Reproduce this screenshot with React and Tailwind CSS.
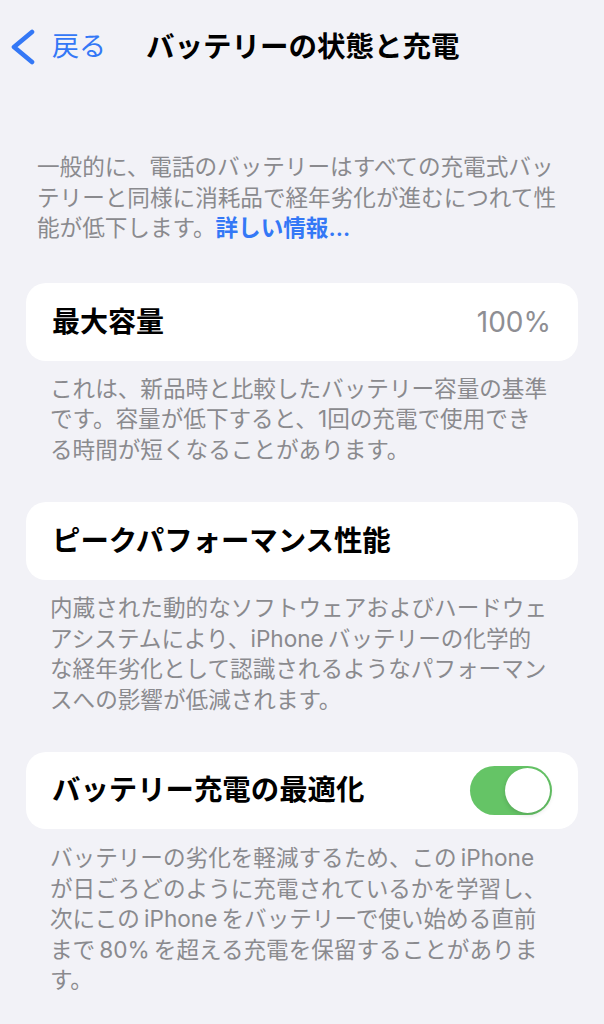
import React, { useState } from 'react';

const FONT = { fontFamily: 'Inter, "Noto Sans CJK JP", sans-serif' };

const Caption = ({ lines, className = '' }) => (
  <p className={`text-[22.6px] leading-[30.5px] text-[#8a8a8e] whitespace-nowrap ${className}`}>
    {lines.map((line, idx) => (
      <span key={idx} className="block">
        {line}
      </span>
    ))}
  </p>
);

const Toggle = ({ on, onChange }) => (
  <button
    onClick={() => onChange(!on)}
    className={`w-[82px] h-[49px] rounded-full p-[2px] flex items-center ${on ? 'bg-[#65c466] justify-end' : 'bg-[#e9e9eb] justify-start'}`}
  >
    <span className="block w-[45px] h-[45px] rounded-full bg-white shadow-[0_2px_5px_rgba(0,0,0,0.15)]" />
  </button>
);

const App = () => {
  const [optimized, setOptimized] = useState(true);

  return (
    <div className="min-h-screen bg-[#f2f2f7] antialiased" style={FONT}>
      {/* Nav bar */}
      <div className="h-[94px] flex items-center pl-2">
        <svg width="28" height="36" viewBox="0 0 28 36" fill="none">
          <polyline
            points="24,3 6,18 24,33"
            stroke="#3478f6"
            strokeWidth="4.6"
            strokeLinecap="round"
            strokeLinejoin="round"
          />
        </svg>
        <span className="ml-4 text-[27px] text-[#3478f6]">戻る</span>
        <h1 className="ml-[40px] text-[28.5px] font-bold text-black">
          バッテリーの状態と充電
        </h1>
      </div>

      {/* Intro */}
      <p className="mt-[58px] pl-[37px] text-[22.6px] leading-[30.5px] text-[#8a8a8e] whitespace-nowrap">
        <span className="block">一般的に、電話のバッテリーはすべての充電式バッ</span>
        <span className="block">テリーと同様に消耗品で経年劣化が進むにつれて性</span>
        <span className="block">
          能が低下します。<span className="text-[#3478f6] font-semibold">詳しい情報...</span>
        </span>
      </p>

      {/* Max capacity */}
      <div className="mt-[39px] mx-[26px] h-[78px] bg-white rounded-[20px] flex items-center justify-between pl-[26px] pr-[27px]">
        <span className="text-[28px] font-semibold text-black">最大容量</span>
        <span className="text-[28px] text-[#8e8e93]">100%</span>
      </div>
      <Caption
        className="mt-[13px] pl-[50px]"
        lines={[
          'これは、新品時と比較したバッテリー容量の基準',
          'です。容量が低下すると、1回の充電で使用でき',
          'る時間が短くなることがあります。',
        ]}
      />

      {/* Peak performance */}
      <div className="mt-[37px] mx-[26px] h-[78px] bg-white rounded-[20px] flex items-center pl-[26px] pr-[27px]">
        <span className="text-[28.4px] font-semibold text-black">ピークパフォーマンス性能</span>
      </div>
      <Caption
        className="mt-[13px] pl-[50px]"
        lines={[
          '内蔵された動的なソフトウェアおよびハードウェ',
          'アシステムにより、iPhone\u2009バッテリーの化学的',
          'な経年劣化として認識されるようなパフォーマン',
          'スへの影響が低減されます。',
        ]}
      />

      {/* Optimized charging */}
      <div className="mt-[37px] mx-[26px] h-[77px] bg-white rounded-[20px] flex items-center justify-between pl-[26px] pr-[26px]">
        <span className="text-[28.4px] font-semibold text-black">バッテリー充電の最適化</span>
        <Toggle on={optimized} onChange={setOptimized} />
      </div>
      <Caption
        className="mt-[14px] pl-[50px] pb-10"
        lines={[
          'バッテリーの劣化を軽減するため、この\u2009iPhone',
          'が日ごろどのように充電されているかを学習し、',
          '次にこの\u2009iPhone\u2009をバッテリーで使い始める直前',
          'まで\u200980%\u2009を超える充電を保留することがありま',
          'す。',
        ]}
      />
    </div>
  );
};

export default App;
